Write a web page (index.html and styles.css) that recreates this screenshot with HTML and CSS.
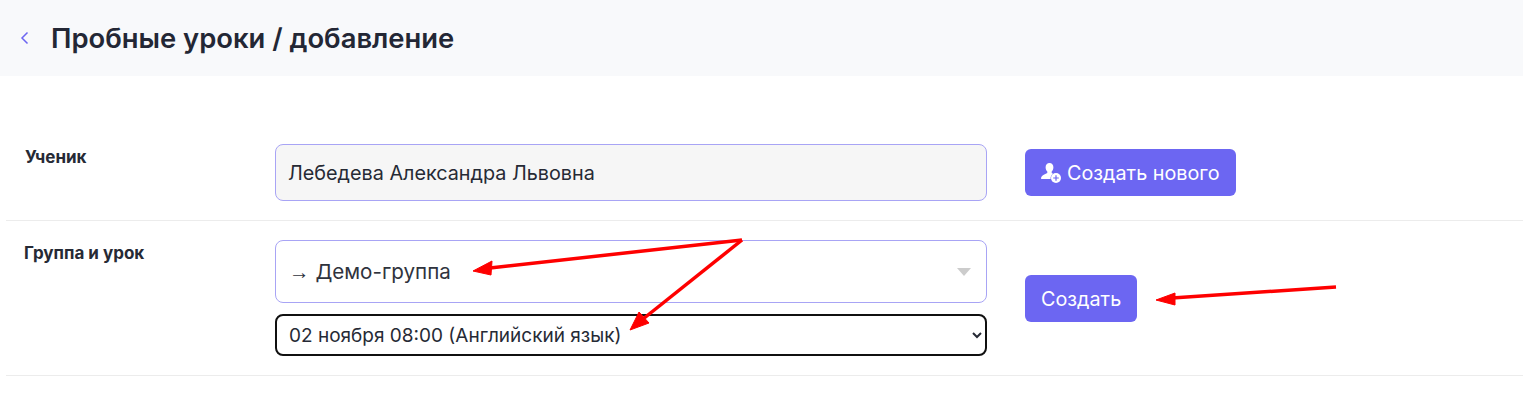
FILE: index.html
```html
<!DOCTYPE html>
<html lang="ru">
<head>
<meta charset="utf-8">
<title>Пробные уроки / добавление</title>
<link rel="stylesheet" href="styles.css">
</head>
<body>
<header class="page-header">
  <a class="back" href="#" aria-label="Назад">
    <svg width="9" height="14" viewBox="0 0 9 14"><path d="M7.5 1.500 L2 7 L7.500 12.500" fill="none" stroke="#6c66f2" stroke-width="1.500"/></svg>
  </a>
  <h1 class="title">Пробные уроки / добавление</h1>
</header>
<main class="form">
  <section class="row row-student">
    <div class="label label-student">Ученик</div>
    <div class="fields">
      <div class="input">Лебедева Александра Львовна</div>
    </div>
    <div class="actions actions-student">
      <button class="btn" type="button">
        <svg class="btn-icon" width="21" height="22" viewBox="0 0 21 22">
          <path d="M8.500 1c2.400 0 3.900 1.800 3.900 4.300 0 1.700-.7 3.300-1.700 4.200v1.500c.5.3 1 .5 1.500.8a5.600 5.600 0 0 0-2.600 5.200H.5c-.3 0-.5-.2-.5-.5 0-2 1.300-3.200 3.300-4.100l3-1.300V9.500C5.300 8.600 4.600 7 4.600 5.300 4.600 2.800 6.100 1 8.500 1z" fill="#fff"/>
          <circle cx="15" cy="16" r="5" fill="#fff"/>
          <path d="M15 13.200v5.600M12.200 16h5.600" stroke="#6c66f2" stroke-width="1.200"/>
        </svg>
        Создать нового
      </button>
    </div>
  </section>
  <section class="row row-group">
    <div class="label label-group">Группа и урок</div>
    <div class="fields">
      <div class="combo">
        <span class="combo-value"><span class="combo-arrow">→</span> Демо-группа</span>
        <span class="caret"></span>
      </div>
      <select class="lesson">
        <option>02 ноября 08:00 (Английский язык)</option>
      </select>
    </div>
    <div class="actions actions-group">
      <button class="btn" type="button">Создать</button>
    </div>
  </section>
</main>
<svg class="annotations" width="1523" height="401" viewBox="0 0 1523 401">
  <g fill="#fe0000" stroke="#fe0000" stroke-linejoin="round">
    <path d="M742 240 L490 268" stroke-width="3.500" fill="none"/>
    <path d="M473 271 L492 261 L491 275 Z" stroke-width="1"/>
    <path d="M742 240 L643 319" stroke-width="3.500" fill="none"/>
    <path d="M630 330 L639 312 L649 323 Z" stroke-width="1"/>
    <path d="M1336 287 L1172 298" stroke-width="3.500" fill="none"/>
    <path d="M1156 300 L1175 293 L1175 305 Z" stroke-width="1"/>
  </g>
</svg>
</body>
</html>
```

FILE: styles.css
```css
* { box-sizing: border-box; }
html, body { margin: 0; padding: 0; }
body {
  position: relative;
  height: 401px;
  overflow: hidden;
  background: #fff;
  font-family: Inter, "Noto Sans", sans-serif;
  color: #262a35;
}
.page-header {
  display: flex;
  align-items: center;
  height: 76px;
  padding-left: 20px;
  background: #f8f9fb;
}
.back { display: flex; width: 31px; }
.title {
  margin: 0;
  font-size: 27.4px;
  font-weight: 600;
  line-height: 32px;
  color: #232735;
}
.form { padding: 68px 0 0 6px; }
.row {
  display: grid;
  grid-template-columns: 269px 712px auto;
  border-bottom: 1px solid #ececec;
}
.row-student { height: 77px; }
.row-group { height: 155px; padding-top: 19px; }
.label {
  padding-left: 19px;
  font-size: 17px;
  font-weight: 700;
  line-height: 20px;
}
.label-student { padding-top: 3px; }
.label-group { padding-top: 3px; padding-left: 18px; }
.fields { display: flex; flex-direction: column; gap: 11px; }
.input {
  display: flex;
  align-items: center;
  height: 57px;
  padding: 0 12px;
  background: #f6f6f6;
  border: 1px solid #a8a4f5;
  border-radius: 8px;
  font-size: 19.8px;
  color: #262a35;
}
.combo {
  display: flex;
  align-items: center;
  justify-content: space-between;
  height: 63px;
  padding: 0 15px 0 13px;
  background: #fff;
  border: 1px solid #a8a4f5;
  border-radius: 8px;
  font-size: 20.6px;
  color: #2f333d;
}
.combo-arrow { font-family: "Liberation Sans", sans-serif; }
.caret {
  width: 0;
  height: 0;
  border-left: 7px solid transparent;
  border-right: 7px solid transparent;
  border-top: 8px solid #cccccc;
}
.lesson {
  width: 100%;
  height: 42px;
  padding: 0 8px;
  background: #fff;
  border: 2px solid #101010;
  border-radius: 8px;
  font-family: Inter, "Noto Sans", sans-serif;
  font-size: 19px;
  color: #262a35;
}
.actions { padding-left: 38px; }
.actions-student { padding-top: 5px; }
.actions-group { padding-top: 35px; }
.btn {
  display: inline-flex;
  align-items: center;
  height: 47px;
  padding: 0 16px;
  background: #6c66f2;
  border: 0;
  border-radius: 6px;
  font-family: Inter, "Noto Sans", sans-serif;
  font-size: 19.8px;
  color: #fff;
}
.btn-icon { margin-right: 5px; }
.annotations { position: absolute; left: 0; top: 0; pointer-events: none; }
```
